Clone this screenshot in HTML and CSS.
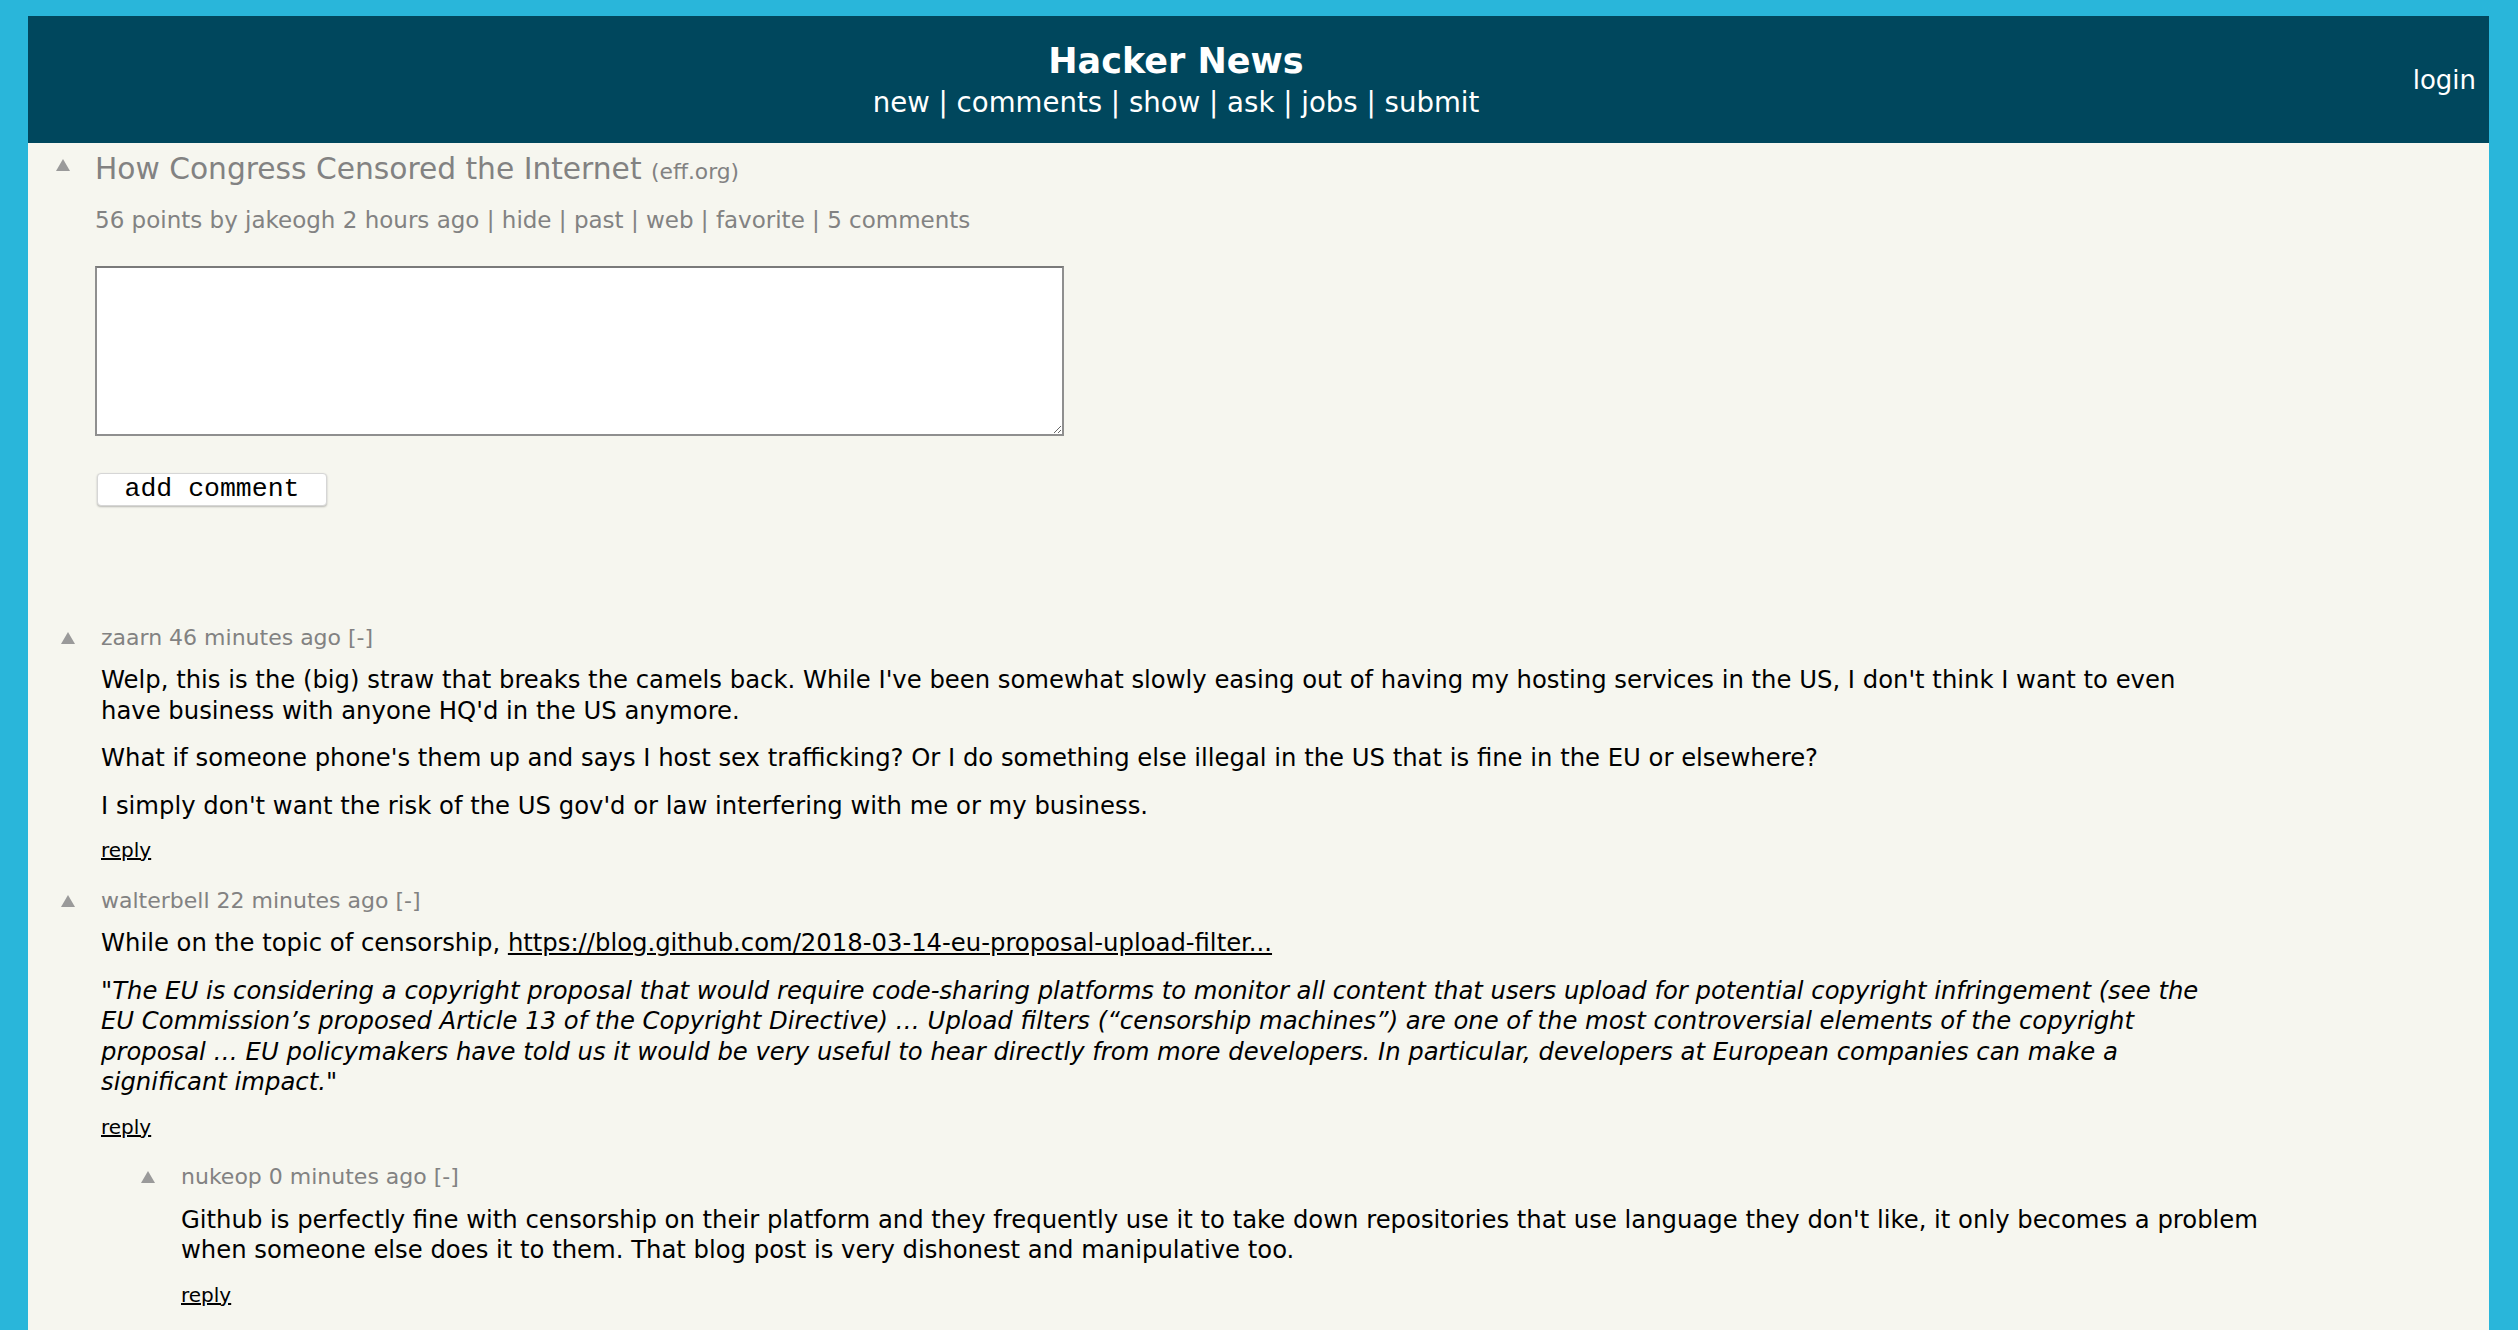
FILE: index.html
```html
<!DOCTYPE html>
<html lang="en">
<head>
<meta charset="utf-8">
<title>How Congress Censored the Internet | Hacker News</title>
<link rel="stylesheet" href="styles.css">
</head>
<body>
<div class="page">
  <header class="topbar">
    <div class="brand">
      <div class="site-name">Hacker News</div>
      <nav class="nav"><a href="#">new</a> | <a href="#">comments</a> | <a href="#">show</a> | <a href="#">ask</a> | <a href="#">jobs</a> | <a href="#">submit</a></nav>
    </div>
    <div class="login"><a href="#">login</a></div>
  </header>

  <main class="content">
    <div class="story">
      <div class="vote story-vote"><span class="arrow"></span></div>
      <div class="story-body">
        <div class="title"><a href="#">How Congress Censored the Internet</a> <span class="domain">(eff.org)</span></div>
        <div class="subtext">56 points by jakeogh 2 hours ago | hide | past | web | favorite | 5 comments</div>
        <form class="comment-form">
          <textarea class="reply-box"></textarea>
          <button type="button" class="submit-btn">add comment</button>
        </form>
      </div>
    </div>

    <div class="comments">
      <div class="comment">
        <div class="vote"><span class="arrow"></span></div>
        <div class="comment-body">
          <div class="comhead">zaarn 46 minutes ago [-]</div>
          <div class="commtext">
            <p class="first">Welp, this is the (big) straw that breaks the camels back. While I've been somewhat slowly easing out of having my hosting services in the US, I don't think I want to even have business with anyone HQ'd in the US anymore.</p>
            <p>What if someone phone's them up and says I host sex trafficking? Or I do something else illegal in the US that is fine in the EU or elsewhere?</p>
            <p>I simply don't want the risk of the US gov'd or law interfering with me or my business.</p>
          </div>
          <div class="reply"><a href="#">reply</a></div>
        </div>
      </div>

      <div class="comment">
        <div class="vote"><span class="arrow"></span></div>
        <div class="comment-body">
          <div class="comhead">walterbell 22 minutes ago [-]</div>
          <div class="commtext">
            <p class="first">While on the topic of censorship, <a href="#">https://blog.github.com/2018-03-14-eu-proposal-upload-filter...</a></p>
            <p class="quote">"The EU is considering a copyright proposal that would require code-sharing platforms to monitor all content that users upload for potential copyright infringement (see the EU Commission’s proposed Article 13 of the Copyright Directive) … Upload filters (“censorship machines”) are one of the most controversial elements of the copyright proposal … EU policymakers have told us it would be very useful to hear directly from more developers. In particular, developers at European companies can make a significant impact."</p>
          </div>
          <div class="reply"><a href="#">reply</a></div>
        </div>
      </div>

      <div class="comment nested">
        <div class="indent"></div>
        <div class="vote"><span class="arrow"></span></div>
        <div class="comment-body">
          <div class="comhead">nukeop 0 minutes ago [-]</div>
          <div class="commtext">
            <p class="first">Github is perfectly fine with censorship on their platform and they frequently use it to take down repositories that use language they don't like, it only becomes a problem when someone else does it to them. That blog post is very dishonest and manipulative too.</p>
          </div>
          <div class="reply"><a href="#">reply</a></div>
        </div>
      </div>
    </div>
  </main>
</div>
</body>
</html>
```

FILE: styles.css
```css
html, body {
  height: 100%;
}

body {
  margin: 0;
  padding: 16px 29px 0 28px;
  background: #29b6da;
  font-family: "DejaVu Sans", Verdana, sans-serif;
  color: #000;
  overflow: hidden;
}

.page {
  background: #f6f6ef;
  min-height: 1314px;
}

/* ---------- top bar ---------- */
.topbar {
  display: flex;
  align-items: center;
  height: 127px;
  background: #00475d;
  color: #fff;
}

.brand {
  width: 2296px;
  text-align: center;
}

.site-name {
  font-weight: bold;
  font-size: 35px;
  line-height: 42px;
}

.nav {
  margin-top: 4px;
  font-size: 27.6px;
  line-height: 34px;
}

.nav a,
.login a {
  color: #fff;
  text-decoration: none;
}

.login {
  flex: 1;
  text-align: right;
  padding-right: 13px;
  font-size: 26px;
  line-height: 34px;
}

/* ---------- story ---------- */
.content {
  padding-top: 8px;
}

.story {
  display: flex;
  padding-left: 28px;
}

.vote {
  width: 15px;
  flex: none;
}

.arrow {
  display: block;
  width: 0;
  height: 0;
  border-left: 7.5px solid transparent;
  border-right: 7.5px solid transparent;
  border-bottom: 12px solid #9a9a9a;
}

.story-vote .arrow {
  margin-top: 8px;
}

.story-body {
  margin-left: 24px;
}

.title {
  font-size: 29.7px;
  line-height: 36px;
  color: #828282;
}

.title a {
  color: #828282;
  text-decoration: none;
}

.domain {
  font-size: 21.8px;
}

.subtext {
  margin-top: 15px;
  font-size: 23px;
  line-height: 30px;
  color: #828282;
}

.comment-form {
  display: flex;
  flex-direction: column;
  align-items: flex-start;
  margin-top: 31px;
}

.reply-box {
  box-sizing: border-box;
  width: 969px;
  height: 170px;
  margin: 0;
  border: 2px solid #8f8f8f;
  border-top-color: #7a7a7a;
  background: #fff;
  resize: both;
}

.submit-btn {
  box-sizing: border-box;
  margin-top: 37px;
  margin-left: 2px;
  width: 230px;
  height: 33px;
  padding: 0;
  background: #fff;
  border: 1px solid #d6d6d6;
  border-radius: 4px;
  box-shadow: 0 1px 2px rgba(0, 0, 0, 0.25);
  font-family: "Liberation Mono", "Courier New", monospace;
  font-size: 26.5px;
  line-height: 31px;
  color: #000;
}

/* ---------- comments ---------- */
.comments {
  margin-top: 117.5px;
}

.comment {
  display: flex;
  padding-left: 33px;
  margin-bottom: 23.5px;
}

.comment .vote .arrow {
  margin-top: 8px;
}

.indent {
  width: 80px;
  flex: none;
}

.comment-body {
  margin-left: 25px;
  width: 2100px;
}

.comhead {
  font-size: 22px;
  line-height: 28px;
  color: #828282;
}

.commtext {
  margin-top: 13.5px;
  font-size: 24.3px;
  line-height: 30.5px;
}

.commtext p {
  margin: 17px 0 0;
}

.commtext p.first {
  margin-top: 0;
}

.commtext a {
  color: #000;
  text-decoration: underline;
}

.quote {
  font-style: italic;
}

.reply {
  margin-top: 16px;
  font-size: 20px;
  line-height: 26px;
}

.reply a {
  color: #000;
  text-decoration: underline;
}
```
